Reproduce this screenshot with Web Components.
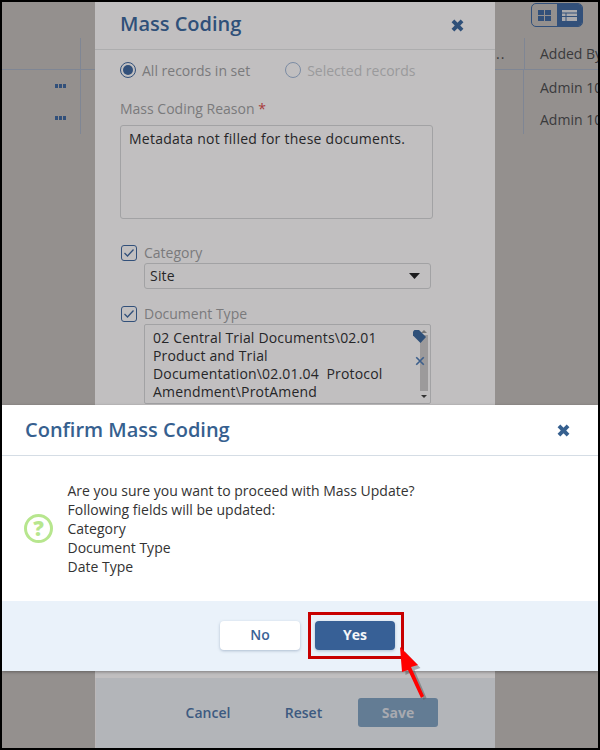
<!DOCTYPE html>
<html>
<head>
<meta charset="utf-8">
<style>
  html, body { margin: 0; padding: 0; background: #000; }
  body { font-family: "Open Sans", sans-serif; }
</style>
</head>
<body>
<shot-frame>
  <back-grid slot="left" rows="dots"></back-grid>
  <mass-coding slot="center"></mass-coding>
  <back-grid slot="right" rows="admin"></back-grid>
  <confirm-dialog slot="over"></confirm-dialog>
  <call-out slot="over"></call-out>
</shot-frame>
<script>
(()=>{

const CROSS = (size, width, color) => `<svg width="${size}" height="${size}" viewBox="0 0 12 12"><path d="M1.8 1.8 10.2 10.2M10.2 1.8 1.8 10.2" stroke="${color}" stroke-width="${width}" fill="none"/></svg>`;

function make (name, html) {
  customElements.define(name, class extends HTMLElement {
    constructor () {
      super();
      this.attachShadow({mode:"open"}).innerHTML = html;
    }
  });
}

// the black frame, with the page columns under the two dialogs
make("shot-frame", `
  <style>
    :host { display: block; width: 600px; height: 750px; box-sizing: border-box; border: solid #000; border-width: 2px; background: #94908e; position: relative; overflow: hidden; }
    .cols { display: grid; grid-template-columns: 93px 400px 103px; height: 746px; }
  </style>
  <div class="cols">
    <slot name="left"></slot>
    <slot name="center"></slot>
    <slot name="right"></slot>
  </div>
  <slot name="over"></slot>
`);

customElements.define("back-grid", class extends HTMLElement {
  constructor () {
    super();
    let admin = this.getAttribute("rows") === "admin";
    let dots = `<svg width="11" height="4" viewBox="0 0 11 4"><path d="M0 0h3v4H0zM4 0h3v4H4zM8 0h3v4H8z" fill="#32507a"/></svg>`;
    let cell = admin ? `<span class="txt">Admin 10</span>` : dots;
    this.attachShadow({mode:"open"}).innerHTML = `
      <style>
        :host { display: block; overflow: hidden; font: 14px "Open Sans", sans-serif; color: #3a3a3c; }
        .bar { height: 36px; display: flex; justify-content: flex-end; box-sizing: border-box; padding: 1px 15px 0 0; }
        .toggle { display: flex; width: 52px; height: 24px; box-sizing: border-box; border: 1px solid #32507a; border-radius: 5px; overflow: hidden; }
        .toggle span { flex: 1; display: flex; align-items: center; justify-content: center; }
        .toggle .on { background: #32507a; }
        .row { display: grid; height: 32px; align-items: center; box-sizing: border-box; }
        .left .row { grid-template-columns: 78px 15px; }
        .right .row { grid-template-columns: 29px 1fr; }
        .head { border-bottom: 1px solid #7f8694; }
        .cell { height: 100%; display: flex; align-items: center; justify-content: flex-end; padding-right: 14px; box-sizing: border-box; }
        .left .edge { border-right: 1px solid #7f8694; height: 100%; margin-left: -1px; width: 1px; }
        .right .edge { border-right: 1px solid #7f8694; height: 100%; }
        .txt { padding: 2px 0 0 16px; white-space: nowrap; }
        .title { border-left: 1px solid #7f8694; height: 100%; display: flex; align-items: center; padding-left: 15px; white-space: nowrap; }
        .more { color: #3a3a3c; padding-left: 1px; line-height: 1; letter-spacing: 1px; }
      </style>
      <div class="${admin ? "right" : "left"}">
        <div class="bar">${admin ? `<div class="toggle">
          <span><svg width="13" height="11" viewBox="0 0 13 11"><path d="M0 0h6v5H0zM7 0h6v5H7zM0 6h6v5H0zM7 6h6v5H7z" fill="#32507a"/></svg></span>
          <span class="on"><svg width="15" height="11" viewBox="0 0 15 11"><path d="M0 0h15v11H0z" fill="#a9a9ad"/><path d="M0 3h15M0 6.5h15M4 3v8" stroke="#32507a" fill="none"/></svg></span>
        </div>` : ""}</div>
        ${admin ? `
        <div class="row head"><span class="more">..</span><span class="title">Added By</span></div>
        <div class="row"><span class="edge"></span>${cell}</div>
        <div class="row"><span class="edge"></span>${cell}</div>` : `
        <div class="row head"><span class="cell"></span><span class="edge"></span></div>
        <div class="row"><span class="cell">${cell}</span><span class="edge"></span></div>
        <div class="row"><span class="cell">${cell}</span><span class="edge"></span></div>`}
      </div>`;
  }
});

make("check-field", `
  <style>
    :host { display: grid; grid-template-columns: 16px 1fr; column-gap: 7px; font: 14px "Open Sans", sans-serif; color: #7a7a7c; }
    .box { width: 16px; height: 16px; box-sizing: border-box; border: 1px solid #32507a; border-radius: 3px; display: flex; align-items: center; justify-content: center; }
    .lab { line-height: 16px; }
    .body { grid-column: 2; margin-top: 2px; }
  </style>
  <span class="box"><svg width="12" height="10" viewBox="0 0 12 10"><path d="M1.5 5 4.5 8 10.5 1.5" fill="none" stroke="#32507a" stroke-width="1.3"/></svg></span>
  <span class="lab"><slot name="label"></slot></span>
  <div class="body"><slot></slot></div>
`);

make("mass-coding", `
  <style>
    :host { display: flex; flex-direction: column; height: 746px; background: #c1bfc0; font: 14px "Open Sans", sans-serif; color: #7a7a7c; }
    header { height: 48px; box-sizing: border-box; border-bottom: 1px solid #adadae; display: flex; align-items: center; justify-content: space-between; padding: 0 31px 0 25px; flex: none; }
    h2 { margin: 0 0 4px; font-size: 20px; font-weight: 600; color: #2f5079; line-height: 42px; }
    .close { display: flex; }
    main { flex: 1; overflow: hidden; padding: 10px 62px 0 25px; }
    .radios { display: flex; height: 20px; align-items: center; }
    .radio { display: flex; align-items: center; gap: 6px; }
    .radio i { width: 16px; height: 16px; box-sizing: border-box; border: 1px solid #32507a; border-radius: 50%; display: flex; align-items: center; justify-content: center; }
    .radio i b { width: 10px; height: 10px; border-radius: 50%; background: #32507a; }
    .radio.off { margin-left: 35px; color: #9a9a9c; }
    .radio.off i { border-color: #7c8ca4; }
    .reason { margin-top: 19px; line-height: 20px; }
    .reason em { color: #a83a3a; font-style: normal; }
    .area { margin: 6px 0 0 0; height: 94px; box-sizing: border-box; width: 313px; border: 1px solid #a2a2a4; border-radius: 3px; padding: 3px 8px; color: #262628; line-height: 20px; letter-spacing: .25px; }
    check-field { margin-left: 1px; }
    .f1 { margin-top: 26px; }
    .f2 { margin-top: 17px; }
    .select { height: 26px; width: 287px; box-sizing: border-box; border: 1px solid #a2a2a4; border-radius: 3px; padding: 0 10px 2px 5px; display: flex; align-items: center; justify-content: space-between; color: #262628; font-weight: 500; letter-spacing: .2px; }
    .select svg { display: block; margin-top: 2px; }
    .multi { width: 287px; height: 80px; box-sizing: border-box; border: 1px solid #a2a2a4; border-radius: 2px; padding: 4px 8px; color: #262628; font-weight: 500; letter-spacing: .17px; line-height: 18px; position: relative; }
    .multi p { margin: 0; width: 250px; white-space: pre-wrap; }
    .scroll { position: absolute; right: 2px; top: 10px; bottom: 12px; width: 8px; background: #9c9a9b; }
    .multi svg { position: absolute; }
    footer { height: 70px; flex: none; background: #b3b5b9; box-sizing: border-box; border-left: 1px solid #bbb7b8; display: flex; align-items: center; padding: 0 0 2px 67px; margin-top: 7px; }
    .link { color: #3d5a80; font-weight: 600; width: 90px; text-align: center; }
    .link.r { width: 101px; }
    .save { margin-left: 4px; width: 80px; height: 29px; border-radius: 3px; background: #637c94; color: #a8aab0; font-weight: 700; display: flex; align-items: center; justify-content: center; }
  </style>
  <header>
    <h2>Mass Coding</h2>
    <span class="close">${CROSS(13, 3.6, "#2f5079")}</span>
  </header>
  <main>
    <div class="radios">
      <span class="radio"><i><b></b></i>All records in set</span>
      <span class="radio off"><i></i>Selected records</span>
    </div>
    <div class="reason">Mass Coding Reason <em>*</em></div>
    <div class="area">Metadata not filled for these documents.</div>
    <check-field class="f1">
      <span slot="label">Category</span>
      <div class="select">Site<svg width="11" height="6" viewBox="0 0 11 6"><path d="M0 0h11L5.5 6z" fill="#1c1c1e"/></svg></div>
    </check-field>
    <check-field class="f2">
      <span slot="label">Document Type</span>
      <div class="multi">
        <p>02 Central Trial Documents\\02.01 Product and Trial Documentation\\02.01.04  Protocol Amendment\\ProtAmend</p>
        <span class="scroll"></span>
        <svg style="right:3px;top:5px" width="6" height="3" viewBox="0 0 6 3"><path d="M0 3h6L3 0z" fill="#777"/></svg>
        <svg style="right:4px;top:5px" width="13" height="13" viewBox="0 0 13 13"><path d="M0 1.5 1.5 0H6l7 7-5.5 6L0 5.5z" fill="#2f5079"/></svg>
        <svg style="right:5px;top:31px" width="10" height="10" viewBox="0 0 12 12"><path d="M1.5 1.5 10.5 10.5M10.5 1.5 1.5 10.5" stroke="#3d5f8c" stroke-width="2" fill="none"/></svg>
        <svg style="right:3px;bottom:5px" width="6" height="3" viewBox="0 0 6 3"><path d="M0 0h6L3 3z" fill="#333"/></svg>
      </div>
    </check-field>
  </main>
  <footer>
    <span class="link">Cancel</span>
    <span class="link r">Reset</span>
    <span class="save">Save</span>
  </footer>
`);

make("app-button", `
  <style>
    :host { display: flex; align-items: center; justify-content: center; width: 80px; height: 29px; box-sizing: border-box; padding-bottom: 2px; border-radius: 4px; font: 600 14px "Open Sans", sans-serif; background: #fff; color: #3a6296; box-shadow: 0 1px 3px rgba(60,90,130,.35); }
    :host([primary]) { background: #376096; color: #f4f6f9; font-weight: 700; }
  </style>
  <slot></slot>
`);

make("confirm-dialog", `
  <style>
    :host { position: absolute; left: 0; top: 403px; width: 596px; height: 266px; background: #fff; display: flex; flex-direction: column; font: 14px "Open Sans", sans-serif; color: #333; box-shadow: 0 1px 3px rgba(0,0,0,.35); }
    header { height: 51px; box-sizing: border-box; border-bottom: 1px solid #d5dde5; display: flex; align-items: center; justify-content: space-between; padding: 0 28px 0 23px; flex: none; }
    h2 { margin: 0 0 2px; font-size: 20px; font-weight: 600; color: #36608f; }
    .close { display: flex; }
    main { flex: 1; display: flex; align-items: center; padding: 0 0 0 22px; gap: 14.5px; }
    .ask { width: 23px; height: 23px; border: 3px solid #b7e68e; border-radius: 50%; flex: none; display: flex; align-items: center; justify-content: center; color: #b7e68e; font-weight: 800; font-size: 21px; line-height: 1; }
    .lines { line-height: 19px; }
    footer { height: 70px; flex: none; background: #eaf2fa; display: flex; align-items: center; justify-content: center; gap: 15px; padding: 0 0 1px 15px; box-sizing: border-box; }
  </style>
  <header>
    <h2>Confirm Mass Coding</h2>
    <span class="close">${CROSS(13, 3.6, "#36608f")}</span>
  </header>
  <main>
    <span class="ask">?</span>
    <div class="lines">Are you sure you want to proceed with Mass Update?<br>Following fields will be updated:<br>Category<br>Document Type<br>Date Type</div>
  </main>
  <footer>
    <app-button>No</app-button>
    <app-button primary>Yes</app-button>
  </footer>
`);

// red annotation drawn over the screenshot
make("call-out", `
  <style>
    :host { position: absolute; left: 0; top: 0; width: 596px; height: 746px; pointer-events: none; }
    .box { position: absolute; left: 306px; top: 610px; width: 96px; height: 47px; box-sizing: border-box; border: 3px solid #c80000; }
    svg { position: absolute; left: 0; top: 0; }
  </style>
  <div class="box"></div>
  <svg width="596" height="746" viewBox="2 2 596 746">
    <path d="M403 650 419 667 413 669 425 697 422 699 410 671 404 674z" fill="#555" opacity=".45" transform="translate(1.5 1)"/>
    <path d="M400 647 418 665 411 667 424 696 421 698 408 670 402 672z" fill="#f00"/>
  </svg>
`);

})();
</script>
</body>
</html>
